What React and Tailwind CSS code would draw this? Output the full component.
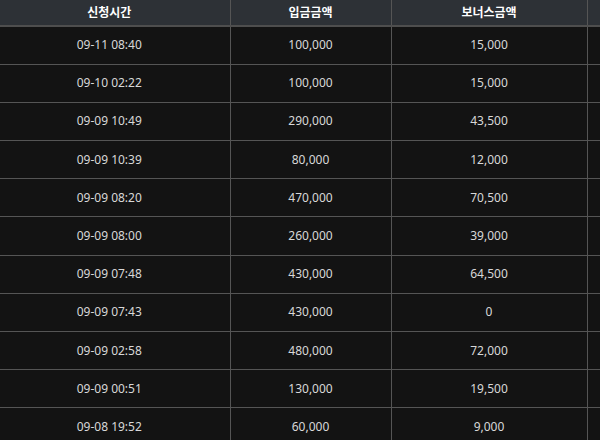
import React from "react";

// 보너스 신청 내역
const rows = [
  ["09-11 08:40", "100,000", "15,000"],
  ["09-10 02:22", "100,000", "15,000"],
  ["09-09 10:49", "290,000", "43,500"],
  ["09-09 10:39", "80,000", "12,000"],
  ["09-09 08:20", "470,000", "70,500"],
  ["09-09 08:00", "260,000", "39,000"],
  ["09-09 07:48", "430,000", "64,500"],
  ["09-09 07:43", "430,000", "0"],
  ["09-09 02:58", "480,000", "72,000"],
  ["09-09 00:51", "130,000", "19,500"],
  ["09-08 19:52", "60,000", "9,000"],
];

export default function App() {
  return (
    <div
      className="w-[600px] h-[440px] overflow-hidden bg-[#131313]"
      style={{ fontFamily: '"Noto Sans", "Noto Sans CJK KR", sans-serif' }}
    >
      <table className="-ml-[11px] w-[640px] border-collapse table-fixed text-[12px]">
        <colgroup>
          <col className="w-[241px]" />
          <col className="w-[161px]" />
          <col className="w-[196px]" />
          <col className="w-[42px]" />
        </colgroup>
        <thead>
          <tr className="h-[26px] bg-[#2d3136] border-b-2 border-[#4e4e4e]">
            <th className="border-r border-[#555] font-bold text-white p-0 leading-none align-middle">신청시간</th>
            <th className="border-r border-[#555] font-bold text-white p-0 leading-none">입금금액</th>
            <th className="border-r border-[#555] font-bold text-white p-0 leading-none">보너스금액</th>
            <th className="p-0"></th>
          </tr>
        </thead>
        <tbody>
          {rows.map((r, i) => (
            <tr key={i} className="h-[38.2px] border-b border-[#555]">
              <td className="border-r border-[#555] text-center text-[#d8d8d8] p-0">{r[0]}</td>
              <td className="border-r border-[#555] text-center text-[#d8d8d8] p-0">{r[1]}</td>
              <td className="border-r border-[#555] text-center text-[#d8d8d8] p-0">{r[2]}</td>
              <td className="p-0"></td>
            </tr>
          ))}
        </tbody>
      </table>
    </div>
  );
}
